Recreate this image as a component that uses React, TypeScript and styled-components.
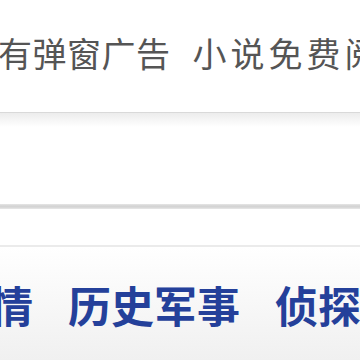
import React from "react";
import styled, { createGlobalStyle } from "styled-components";

const Global = createGlobalStyle`
  html, body { margin: 0; padding: 0; background: #fff; }
  body { width: 360px; height: 360px; overflow: hidden; }
`;

const Page = styled.div`
  width: 360px;
  height: 360px;
  overflow: hidden;
  display: flex;
  flex-direction: column;
  font-family: "Noto Sans CJK SC", "Noto Sans", sans-serif;
`;

const Notice = styled.div`
  height: 112px;
  display: flex;
  align-items: center;
  gap: 22px;
  margin-left: -2px;
  padding-bottom: 6px;
  box-sizing: border-box;
  white-space: nowrap;
  font-size: 34px;
  color: #555;
`;

const Phrase = styled.span<{ $spacing: number }>`
  letter-spacing: ${(p) => p.$spacing}px;
  line-height: 1;
`;

const Panel = styled.div`
  height: 91px;
  border-top: 1px solid #d9d9d9;
  background: linear-gradient(#ececec 0px, #ffffff 14px, #ffffff 100%);
`;

const Rule = styled.div`
  height: 5px;
  background: linear-gradient(#e6e6e6, #d4d4d4 40%, #d4d4d4 60%, #e8e8e8);
`;

const Spacer = styled.div`
  height: 36px;
  background: #fff;
`;

const Nav = styled.nav`
  flex: 1;
  border-top: 2px solid #ebebeb;
  background: linear-gradient(#ffffff, #f0f0f0);
  display: flex;
  align-items: center;
  gap: 35px;
  margin-left: -10px;
  padding-top: 2px;
  white-space: nowrap;
`;

const NavItem = styled.a`
  font-size: 43px;
  font-weight: 700;
  color: #24409a;
  text-decoration: none;
  line-height: 1;
`;

export default function App() {
  return (
    <Page>
      <Global />
      <Notice>
        <Phrase $spacing={0.5}>有弹窗广告</Phrase>
        <Phrase $spacing={4}>小说免费阅读</Phrase>
      </Notice>
      <Panel />
      <Rule />
      <Spacer />
      <Nav>
        <NavItem>情</NavItem>
        <NavItem>历史军事</NavItem>
        <NavItem>侦探推理</NavItem>
      </Nav>
    </Page>
  );
}
